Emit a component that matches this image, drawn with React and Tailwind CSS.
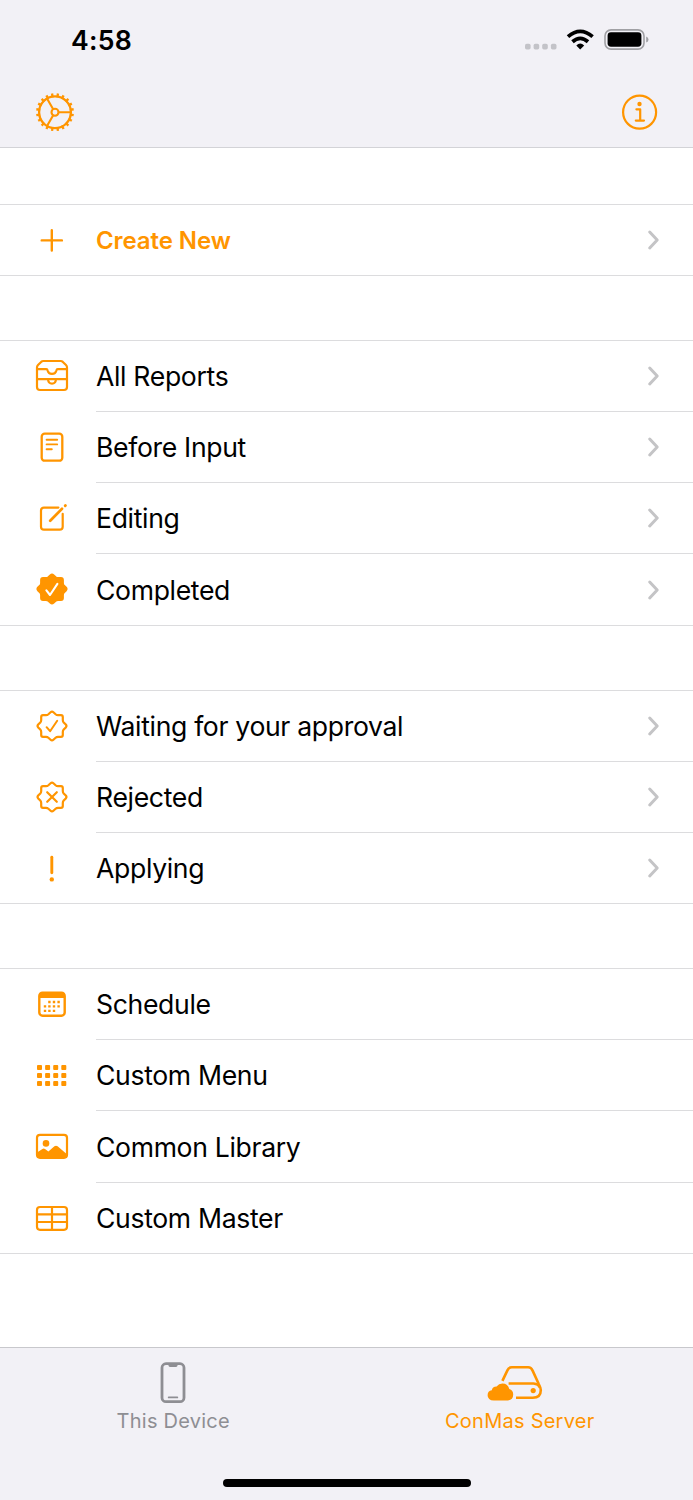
import clsx from "clsx";

const BADGE_PATH =
  "M18.6 6.2 Q20 4.9 21.4 6.2 L23.6 8.3 Q24.6 9.2 26 9.2 H29 Q30.8 9.2 30.8 11 V14 Q30.8 15.4 31.7 16.4 L33.8 18.6 Q35.1 20 33.8 21.4 L31.7 23.6 Q30.8 24.6 30.8 26 V29 Q30.8 30.8 29 30.8 H26 Q24.6 30.8 23.6 31.7 L21.4 33.8 Q20 35.1 18.6 33.8 L16.4 31.7 Q15.4 30.8 14 30.8 H11 Q9.2 30.8 9.2 29 V26 Q9.2 24.6 8.3 23.6 L6.2 21.4 Q4.9 20 6.2 18.6 L8.3 16.4 Q9.2 15.4 9.2 14 V11 Q9.2 9.2 11 9.2 H14 Q15.4 9.2 16.4 8.3 Z";

const icons = {
  plus: <path d="M19.8 10.3V30.5M9.7 20.4H29.9" strokeWidth="2.4" />,
  tray: (
    <>
      <path d="M11.2 5H28.8Q29.8 5 30.6 5.7L34 9Q35 10 35 11.5V31Q35 34 32 34H8Q5 34 5 31V11.5Q5 10 6 9L9.4 5.7Q10.2 5 11.2 5Z" />
      <path d="M5 13.2H14.2Q15.4 13.2 15.6 14.4Q16.4 17.8 20 17.8Q23.6 17.8 24.4 14.4Q24.6 13.2 25.8 13.2H35M5 23.2H35M16 23.5Q16.4 27.6 20 27.6Q23.6 27.6 24 23.5" />
    </>
  ),
  doc: (
    <>
      <rect x="9.7" y="6.7" width="20.6" height="27" rx="3" strokeWidth="2.3" />
      <path d="M14.6 12.8H25.2M14.6 17.4H25.2M14.6 22.3H19.8" strokeWidth="1.9" />
    </>
  ),
  edit: (
    <>
      <path d="M26.4 9.6H12Q9 9.6 9 12.6V28.7Q9 31.7 12 31.7H27.7Q30.7 31.7 30.7 28.7V15.8" />
      <path d="M18.2 22.8L30 10.8" strokeWidth="2.7" />
      <path d="M33.2 7.7L33.4 7.5" strokeWidth="2.9" />
    </>
  ),
  badgeFill: (
    <>
      <path d={BADGE_PATH} fill="currentColor" />
      <path d="M14.4 21.4L18 26L25.4 14.8" stroke="white" strokeWidth="2.1" />
    </>
  ),
  badgeCheck: (
    <>
      <path d={BADGE_PATH} />
      <path d="M14.6 21.2L18.1 25.2L25.2 14.8" strokeWidth="2" />
    </>
  ),
  badgeX: (
    <>
      <path d={BADGE_PATH} />
      <path d="M15.2 15.2L24.8 24.8M24.8 15.2L15.2 24.8" />
    </>
  ),
  bang: (
    <>
      <path d="M19.8 9.2V24.8" strokeWidth="2.9" />
      <circle cx="19.8" cy="31.4" r="2.2" fill="currentColor" stroke="none" />
    </>
  ),
  calendar: (
    <>
      <rect x="7.3" y="8.7" width="25.4" height="23" rx="3.2" strokeWidth="2.4" />
      <path d="M7 14V11.5Q7 8.5 10 8.5H30Q33 8.5 33 11.5V14Z" fill="currentColor" stroke="none" />
      <path
        d="M16.2 18H18.6M20.8 18H23.2M25.4 18H27.8M11.8 22.4H14.2M16.2 22.4H18.6M20.8 22.4H23.2M25.4 22.4H27.8M11.8 26.8H14.2M16.2 26.8H18.6M20.8 26.8H23.2"
        strokeWidth="2.3"
        strokeLinecap="butt"
      />
    </>
  ),
  grid: (
    <g fill="currentColor" stroke="none">
      {[10.1, 18.1, 26.1].map((y) =>
        [5, 13.1, 21.2, 29.3].map((x) => <rect key={`${x}-${y}`} x={x} y={y} width="5" height="4.8" rx="0.9" />)
      )}
    </g>
  ),
  photo: (
    <>
      <rect x="5" y="8.8" width="30" height="23" rx="3" />
      <circle cx="14" cy="17.4" r="3.3" fill="currentColor" stroke="none" />
      <path
        d="M5 26.6L10.4 23Q11.8 22.2 13 23.1L16.4 25.6L22.4 20.3Q24 19 25.6 20.3L35 28.2V30.2Q34.4 32 32 32H8Q5 32 5 29.2Z"
        fill="currentColor"
        stroke="none"
      />
    </>
  ),
  table: (
    <>
      <rect x="5" y="9" width="30" height="22.8" rx="3" />
      <path d="M5 16.3H35M5 24H35M20 9V31.8" />
    </>
  ),
};

const sections = [
  {
    gap: "mt-14",
    rows: [{ label: "Create New", icon: "plus", chevron: true, text: "text-[24px] font-semibold text-[#ff9500] tracking-[-0.08px]" }],
  },
  {
    gap: "mt-16",
    rows: [
      { label: "All Reports", icon: "tray", chevron: true },
      { label: "Before Input", icon: "doc", chevron: true },
      { label: "Editing", icon: "edit", chevron: true },
      { label: "Completed", icon: "badgeFill", chevron: true, tall: true },
    ],
  },
  {
    gap: "mt-16",
    rows: [
      { label: "Waiting for your approval", icon: "badgeCheck", chevron: true },
      { label: "Rejected", icon: "badgeX", chevron: true },
      { label: "Applying", icon: "bang", chevron: true },
    ],
  },
  {
    gap: "mt-16",
    rows: [
      { label: "Schedule", icon: "calendar" },
      { label: "Custom Menu", icon: "grid" },
      { label: "Common Library", icon: "photo", tall: true },
      { label: "Custom Master", icon: "table" },
    ],
  },
];

function Icon({ name }) {
  return (
    <svg
      viewBox="0 0 40 40"
      className="size-10 shrink-0 text-[#ff9500]"
      fill="none"
      stroke="currentColor"
      strokeWidth="2.2"
      strokeLinecap="round"
      strokeLinejoin="round"
    >
      {icons[name]}
    </svg>
  );
}

function MenuRow({ row, last }) {
  return (
    <li className={clsx("flex pl-8", row.tall ? "h-[72px]" : "h-[71px]", last && "border-b border-[#dcdcde]")}>
      <div className={clsx("flex items-center", last ? "pb-px" : "pb-0.5")}>
        <Icon name={row.icon} />
      </div>
      <div className={clsx("ml-6 flex flex-1 items-center justify-between pr-8", !last && "border-b border-[#dcdcde]")}>
        <span className={clsx("pt-0.5 whitespace-nowrap", row.text || "text-[26.6px] tracking-[-0.34px] text-black")}>{row.label}</span>
        {row.chevron && (
          <svg viewBox="0 0 16 24" className="h-6 w-4" fill="none" stroke="#c4c4c6" strokeWidth="3" strokeLinecap="round" strokeLinejoin="round">
            <path d="M4.7 4L12.2 12L4.7 20" />
          </svg>
        )}
      </div>
    </li>
  );
}

function StatusBar() {
  return (
    <div className="flex h-20 items-center justify-between pr-[43px] pl-[71px]">
      <span className="pt-px text-[26.6px] font-semibold tracking-[0.25px] text-black">4:58</span>
      <svg viewBox="0 0 126 28" className="h-7 w-[126px]">
        <g fill="#c3c3c8">
          <rect x="1" y="17.8" width="5.6" height="5.6" rx="1.7" />
          <rect x="9.6" y="17.8" width="5.6" height="5.6" rx="1.7" />
          <rect x="18.2" y="17.8" width="5.6" height="5.6" rx="1.7" />
          <rect x="26.9" y="17.8" width="5.6" height="5.6" rx="1.7" />
        </g>
        <g fill="none" stroke="black" strokeWidth="3.8">
          <path d="M44 10.6Q56.2 0.2 68.6 10.6" />
          <path d="M48.5 15.7Q56.2 9 64 15.7" />
        </g>
        <path d="M52.3 19.4Q56.2 15.4 60.2 19.4L56.2 23.4Z" fill="black" />
        <rect x="81" y="3.9" width="39" height="19.2" rx="6" fill="none" stroke="#a0a0a4" strokeWidth="1.6" />
        <rect x="83.6" y="6.3" width="33.8" height="14.4" rx="3.4" fill="black" />
        <path d="M122.2 10.4Q124.5 11.2 124.5 13.5Q124.5 15.8 122.2 16.6Z" fill="#a0a0a4" />
      </svg>
    </div>
  );
}

function GearIcon() {
  const teeth = Array.from({ length: 20 }, (_, i) => i * 18);
  return (
    <svg viewBox="0 0 40 40" className="size-10" fill="none" stroke="#ff9500" strokeWidth="2.1">
      <circle cx="20" cy="20.2" r="15.9" strokeWidth="2.3" />
      <circle cx="20" cy="20.2" r="3.5" />
      {teeth.map((deg) => (
        <path key={deg} d="M20 5V1.1" strokeWidth="2.3" transform={`translate(0 0.2) rotate(${deg + 9} 20 20)`} />
      ))}
      <path d="M23.5 20.2H36M18.2 17.2L12 6.4M18.2 23.2L12 34" />
    </svg>
  );
}

function InfoIcon() {
  return (
    <svg viewBox="0 0 40 40" className="size-10" fill="none" stroke="#ff9500" strokeWidth="2.2" strokeLinecap="round" strokeLinejoin="round">
      <circle cx="19.6" cy="20.2" r="16.5" />
      <circle cx="19.5" cy="12" r="2.2" fill="#ff9500" stroke="none" />
      <path d="M16.4 17.3H20.2V28.5M15.8 28.6H24" />
    </svg>
  );
}

function TabBar() {
  return (
    <footer className="mt-[93px] h-[153px] border-t border-[#c8c8cc] bg-[#f2f1f6]">
      <nav className="grid h-[128px] grid-cols-2">
        <div className="flex flex-col items-center pt-[11px] text-[#8e8e93]">
          <svg viewBox="0 0 40 46" className="h-[46px] w-10" fill="none" stroke="currentColor">
            <rect x="9" y="4.7" width="22" height="38" rx="4" strokeWidth="2.8" />
            <path d="M15.5 4.5H24.5V6.3Q24.5 7.9 23 7.9H17Q15.5 7.9 15.5 6.3Z" fill="currentColor" stroke="none" />
            <path d="M15.7 38.4H24.3" strokeWidth="1.8" strokeLinecap="round" />
          </svg>
          <span className="text-[20px] leading-8 tracking-[0.25px] whitespace-nowrap">This Device</span>
        </div>
        <div className="flex flex-col items-center pt-[11px] text-[#ff9500]">
          <svg viewBox="0 0 60 46" className="h-[46px] w-[60px]" fill="none" stroke="currentColor" strokeWidth="2.6">
            <path d="M12.4 21.9L17.4 11.4Q18.8 8.3 21.8 8.3H38.2Q41.2 8.3 42.5 11.4L48.5 24.5Q50.8 29 50.8 31Q50.8 38.8 42.8 38.8H26" />
            <path d="M18.6 24.5H43.4Q48.8 25 50 29" />
            <circle cx="43.2" cy="31.6" r="2.6" fill="currentColor" stroke="none" />
            <path
              d="M3.6 41.6Q-2.6 41.2 -2.6 36.2Q-2.6 31.7 1.6 31.2Q2 27.4 6.4 27.4Q8.6 24.4 12.2 24.4Q17.9 24.4 19.1 30Q23 31.2 23 35.6Q23 41 17.6 41.6Z"
              fill="currentColor"
              stroke="none"
              transform="translate(0.2 0)"
            />
          </svg>
          <span className="text-[20px] leading-8 tracking-[0.25px] whitespace-nowrap">ConMas Server</span>
        </div>
      </nav>
      <div className="mx-auto mt-[3px] h-2 w-[248px] rounded-full bg-black" />
    </footer>
  );
}

export default function App() {
  return (
    <div className="h-[1500px] w-[693px] overflow-hidden bg-white font-['Inter',sans-serif] [&_svg]:overflow-visible">
      <header className="h-[148px] border-b border-[#d3d3d7] bg-[#f2f1f6]">
        <StatusBar />
        <div className="flex h-16 items-center justify-between pr-[33px] pl-[35px]">
          <GearIcon />
          <InfoIcon />
        </div>
      </header>
      <main>
        {sections.map((section, index) => (
          <ul key={index} className={clsx("border-t border-[#dcdcde]", section.gap)}>
            {section.rows.map((row, i) => (
              <MenuRow key={row.label} row={row} last={i === section.rows.length - 1} />
            ))}
          </ul>
        ))}
      </main>
      <TabBar />
    </div>
  );
}
